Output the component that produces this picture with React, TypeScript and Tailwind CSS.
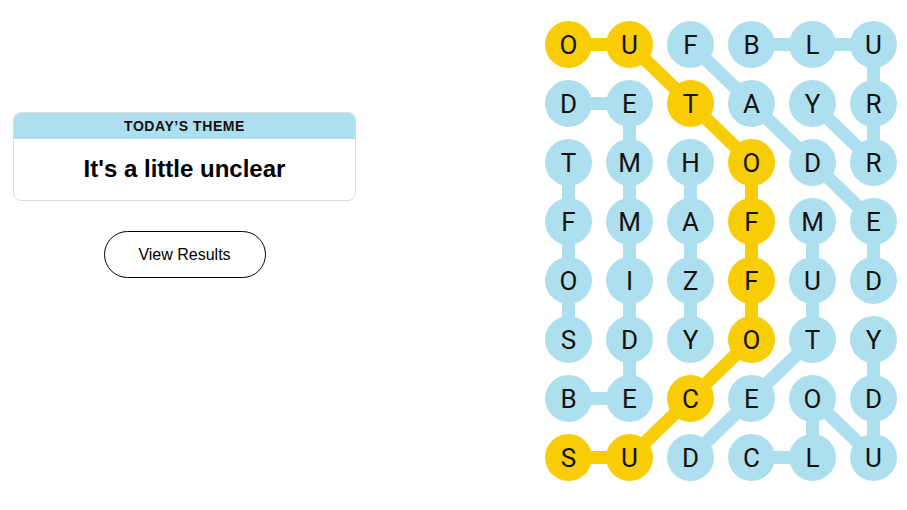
import React from 'react'

const board = [
  'OUFBLU',
  'DETAYR',
  'TMHODR',
  'FMAFME',
  'OIZFUD',
  'SDYOTY',
  'BECEOD',
  'SUDCLU',
]

// found words as cell paths [row, col]
const words: { path: number[][]; spangram?: boolean }[] = [
  { path: [[0,0],[0,1],[1,2],[2,3],[3,3],[4,3],[5,3],[6,2],[7,1],[7,0]], spangram: true },
  { path: [[0,3],[0,4],[0,5],[1,5],[2,5],[1,4]] },
  { path: [[0,2],[1,3],[2,4],[3,5],[4,5]] },
  { path: [[6,0],[6,1],[5,1],[4,1],[3,1],[2,1],[1,1],[1,0]] },
  { path: [[5,0],[4,0],[3,0],[2,0]] },
  { path: [[2,2],[3,2],[4,2],[5,2]] },
  { path: [[3,4],[4,4],[5,4],[6,3],[7,2]] },
  { path: [[7,3],[7,4],[6,4],[7,5],[6,5],[5,5]] },
]

const CW = 61
const CH = 59
const BLUE = '#aedfee'
const YELLOW = '#f8cd05'

const cellColor = (r: number, c: number) =>
  words.some((w) => w.spangram && w.path.some(([a, b]) => a === r && b === c)) ? 'bg-[#f8cd05]' : 'bg-[#aedfee]'

function Board() {
  return (
    <div className="relative w-[366px]">
      <svg className="absolute inset-0" width={366} height={472}>
        {words.map((w, i) =>
          w.path.slice(1).map(([r, c], j) => {
            const [pr, pc] = w.path[j]
            return (
              <line
                key={i + '-' + j}
                x1={pc * CW + CW / 2}
                y1={pr * CH + CH / 2}
                x2={c * CW + CW / 2}
                y2={r * CH + CH / 2}
                stroke={w.spangram ? YELLOW : BLUE}
                strokeWidth={13}
              />
            )
          })
        )}
      </svg>
      <div className="relative grid grid-cols-6">
        {board.map((row, r) =>
          row.split('').map((ch, c) => (
            <div key={r + '-' + c} className="h-[59px] flex items-center justify-center">
              <div className={`w-[47px] h-[47px] rounded-full flex items-center justify-center font-['Roboto',sans-serif] text-[26px] leading-none text-[#121212] ${cellColor(r, c)}`}>
                {ch}
              </div>
            </div>
          ))
        )}
      </div>
    </div>
  )
}

export default function App() {
  return (
    <div className="w-[907px] h-[510px] bg-white flex font-['Liberation_Sans',Arial,sans-serif]">
      <div className="ml-[13px] mt-[112px] w-[343px] flex flex-col items-center">
        <div className="w-full rounded-lg border border-[#dcdcdc] overflow-hidden">
          <div className="h-[26px] bg-[#aedfee] flex items-center justify-center text-[14px] font-bold tracking-[0.04em] text-[#121212]">
            TODAY’S THEME
          </div>
          <div className="h-[61px] flex items-center justify-center text-[24px] font-bold text-black pb-[2px]">
            It's a little unclear
          </div>
        </div>
        <button className="mt-[30px] w-[162px] h-[47px] rounded-full border border-black text-[16px] text-black bg-white">
          View Results
        </button>
      </div>
      <div className="ml-auto mr-[3px] mt-[15px]">
        <Board />
      </div>
    </div>
  )
}
